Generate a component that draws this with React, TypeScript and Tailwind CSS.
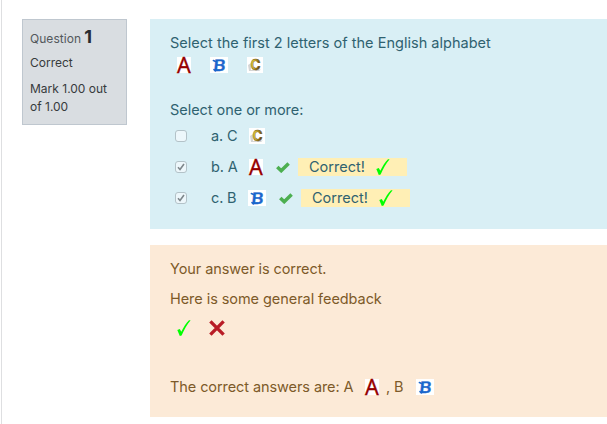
import React from "react";

function LetterA() {
  return (
    <svg width="14" height="16" viewBox="0 0 14 16" className="block shrink-0 overflow-visible">
      <path d="M0 0H14V16H0Z" fill="#fff" />
      <text x="0.1" y="15.8" fontSize="21.5" textLength="13.8" lengthAdjust="spacingAndGlyphs" fontFamily="Noto Sans, sans-serif" fill="#960000" stroke="#960000" strokeWidth="0.35">A</text>
    </svg>
  );
}

function LetterB() {
  return (
    <svg width="18" height="16" viewBox="0 0 18 16" className="block shrink-0 overflow-visible">
      <path d="M0 0H18V16H0Z" fill="#fff" />
      <g transform="skewX(-6)">
        <text x="4.4" y="14.2" fontSize="16" textLength="12" lengthAdjust="spacingAndGlyphs" fontFamily="Inter, sans-serif" fontWeight="600" fill="#1b66cc" stroke="#1b66cc" strokeWidth="0.3">B</text>
      </g>
      <path d="M3.4 3.6 L5.5 4.4M4 12.6 L5.5 13.8" fill="none" stroke="#1b66cc" strokeWidth="1.6" strokeLinecap="round" />
    </svg>
  );
}

function LetterC() {
  return (
    <svg width="16" height="16" viewBox="0 0 16 16" className="block shrink-0 overflow-visible">
      <defs>
        <linearGradient id="gold" x1="0" x2="1" y1="0" y2="0.3">
          <stop offset="0" stopColor="#eadb35" />
          <stop offset="0.5" stopColor="#c9a72c" />
          <stop offset="1" stopColor="#5a390a" />
        </linearGradient>
      </defs>
      <path d="M0 0H16V16H0Z" fill="#fff" />
      <path d="M1 8 L4 6 V13 L14 12.5 L12 14 H2Z" fill="#d5d5d5" />
      <text x="3.4" y="13" fontSize="14.5" textLength="10" lengthAdjust="spacingAndGlyphs" fontFamily="Inter, sans-serif" fontWeight="700" fill="url(#gold)" stroke="#6b531b" strokeWidth="0.4">C</text>
    </svg>
  );
}

function Tick() {
  return (
    <svg width="14" height="16" viewBox="0 0 14 16" className="block shrink-0">
      <path d="M0.3 9.9 L2.8 9 L4.3 11.8 C6.5 7.1 9.2 3 12 0.2 H13.6 C9.8 4.7 7 10 4.6 15.4 L2.8 16 Z" fill="#0f0" />
    </svg>
  );
}

function Cross() {
  return (
    <svg width="16" height="16" viewBox="0 0 16 16" className="block shrink-0">
      <path d="M1.4 1.4 L14.6 14.6 M14.6 1.4 L1.4 14.6" stroke="#b81c26" strokeWidth="3.4" />
    </svg>
  );
}

function GreenCheck() {
  return (
    <svg width="14" height="11" viewBox="0 0 14 11" className="block shrink-0">
      <path d="M1.3 4.9 L5.2 8.7 L12.6 1.4" fill="none" stroke="#4caf50" strokeWidth="3.5" />
    </svg>
  );
}

function Checkbox({ checked = false }: { checked?: boolean }) {
  return (
    <span className="ml-[5px] flex size-3 shrink-0 items-center justify-center rounded-[3px] border border-[#b3c2c8] bg-[#edf7fb]">
      {checked && (
        <svg width="8" height="8" viewBox="0 0 8 8">
          <path d="M1 4.3 L3 6.5 L7 1" fill="none" stroke="#7d868a" strokeWidth="1.6" />
        </svg>
      )}
    </span>
  );
}

function Correct() {
  return (
    <span className="-mt-px flex h-[18px] w-[109px] shrink-0 items-center bg-[#ffefb5] pl-[11px]">
      <span className="w-[67px]">Correct!</span>
      <Tick />
    </span>
  );
}

export default function App() {
  return (
    <div className="flex h-[424px] w-[607px] overflow-hidden bg-white font-['Inter',sans-serif] text-[14.5px] leading-[18px] whitespace-nowrap">
      <div className="ml-px w-px shrink-0 bg-[#dedfe1]" />
      <aside className="mt-[19px] ml-5 h-[106px] w-[105px] shrink-0 border border-[#bfc7cf] bg-[#d9dde1] pl-[7px] text-[12px] leading-[18px] text-[#373a3c]">
        <div className="mt-[6px] flex h-[22px] items-baseline text-[#53585c]">
          <span className="tracking-[0.05px]">Question</span>
          <b className="ml-[3px] text-[18px] leading-[22px] text-[#282c30]">1</b>
        </div>
        <div className="mt-[6px]">Correct</div>
        <div className="mt-2">Mark 1.00 out<br />of 1.00</div>
      </aside>

      <main className="mt-[19px] ml-[23px] w-[457px] shrink-0">
        <section className="h-[210px] bg-[#d9eff5] pt-[15px] pl-5 text-[#2f6270]">
          <p className="tracking-[0.02px]">Select the first 2 letters of the English alphabet</p>
          <div className="mt-[5px] flex pl-[7px]">
            <LetterA />
            <span className="ml-[19px]"><LetterB /></span>
            <span className="ml-[19px]"><LetterC /></span>
          </div>
          <p className="mt-7 tracking-[-0.04px]">Select one or more:</p>
          <div className="mt-[9px] flex h-4 items-center">
            <Checkbox />
            <span className="ml-6 w-[38px] tracking-[-0.15px]">a. C</span>
            <LetterC />
          </div>
          <div className="mt-[15px] flex h-4 items-center">
            <Checkbox checked />
            <span className="ml-6 w-[38px] tracking-[-0.15px]">b. A</span>
            <LetterA />
            <span className="mr-2 ml-[13px]"><GreenCheck /></span>
            <Correct />
          </div>
          <div className="mt-[15px] flex h-4 items-center">
            <Checkbox checked />
            <span className="ml-6 w-[37px] tracking-[-0.15px]">c. B</span>
            <LetterB />
            <span className="mr-2 ml-[13px]"><GreenCheck /></span>
            <Correct />
          </div>
        </section>

        <section className="mt-4 h-[172px] bg-[#fcead7] pt-[15px] pl-5 text-[#7d5a29]">
          <p className="tracking-[-0.08px]">Your answer is correct.</p>
          <p className="mt-3 tracking-[-0.06px]">Here is some general feedback</p>
          <div className="mt-3 flex pl-[7px]">
            <Tick />
            <span className="ml-[18px]"><Cross /></span>
          </div>
          <div className="mt-[43px] flex h-4 items-center">
            <span className="w-[195px] tracking-[-0.08px]">The correct answers are: A</span>
            <LetterA />
            <span className="ml-[7px] w-[30px] tracking-[-0.1px]">, B</span>
            <LetterB />
          </div>
        </section>
      </main>
    </div>
  );
}
